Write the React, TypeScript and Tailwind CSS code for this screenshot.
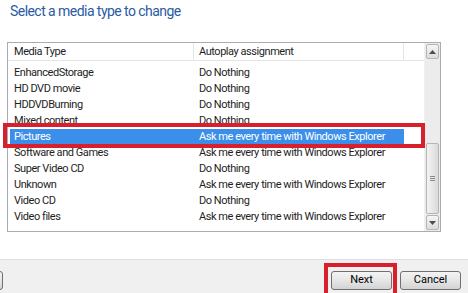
const ROWS = [
  { type: "EnhancedStorage", action: "Do Nothing" },
  { type: "HD DVD movie", action: "Do Nothing" },
  { type: "HDDVDBurning", action: "Do Nothing" },
  { type: "Mixed content", action: "Do Nothing" },
  { type: "Pictures", action: "Ask me every time with Windows Explorer", selected: true },
  { type: "Software and Games", action: "Ask me every time with Windows Explorer" },
  { type: "Super Video CD", action: "Do Nothing" },
  { type: "Unknown", action: "Ask me every time with Windows Explorer" },
  { type: "Video CD", action: "Do Nothing" },
  { type: "Video files", action: "Ask me every time with Windows Explorer" },
];

function Arrow({ down }: { down?: boolean }) {
  return (
    <svg width="7" height="4" viewBox="0 0 7 4" className={down ? "rotate-180" : ""}>
      <path d="M0 4 L3.5 0 L7 4 Z" fill="#4d4d4d" />
    </svg>
  );
}

function WinButton({ label, className = "" }: { label: string; className?: string }) {
  return (
    <div
      className={`flex h-[19px] items-center justify-center rounded-[3px] border border-[#707070] bg-gradient-to-b from-[#f4f4f4] via-[#e6e6e6] to-[#d3d3d3] text-[11px] text-black ${className}`}
    >
      {label}
    </div>
  );
}

export default function App() {
  return (
    <div
      className="relative h-[293px] w-[468px] overflow-hidden bg-white text-[#1e1e1e]"
      style={{ fontFamily: 'Roboto, "Open Sans", sans-serif' }}
    >
      <div className="pl-[10px] pt-[1px] text-[14px] leading-[20px] tracking-[-0.55px] text-[#2a5ba3]">
        Select a media type to change
      </div>

      {/* list view */}
      <div className="ml-[7px] mt-[21px] flex h-[190px] w-[434px] border border-[#a9acb2]">
        <div className="flex-1 whitespace-nowrap tracking-[-0.45px]">
          <div className="flex h-[18px] items-center border-b border-[#e5e5e5] text-[11px] text-[#1e1e1e]">
            <div className="w-[186px] border-r border-[#e5e5e5] pl-[6px] leading-[18px]">Media Type</div>
            <div className="w-[210px] border-r border-[#e5e5e5] pl-[5px] leading-[18px]">Autoplay assignment</div>
          </div>
          <div className="pt-[4px]">
            {ROWS.map((r) => (
              <div
                key={r.type}
                className={`flex h-[16px] items-center text-[11px] leading-[16px] ${
                  r.selected ? "ml-[2px] w-[394px] bg-[#3b8fea] text-white" : ""
                }`}
              >
                <div className={r.selected ? "w-[184px] pl-[4px]" : "w-[186px] pl-[6px]"}>{r.type}</div>
                <div className="pl-[5px]">{r.action}</div>
              </div>
            ))}
          </div>
        </div>

        {/* scrollbar */}
        <div className="flex w-[16px] flex-col border-l border-[#f0f0f0] bg-[#ececec] pb-[1px] pt-[1px]">
          <div className="mx-[1px] flex h-[15px] items-center justify-center rounded-[2px] border border-[#b5b5b5] bg-gradient-to-b from-[#f5f5f5] to-[#dcdcdc]">
            <Arrow />
          </div>
          <div className="h-[84px]" />
          <div className="mx-[1px] flex h-[71px] items-center justify-center rounded-[2px] border border-[#b5b5b5] bg-gradient-to-r from-[#f3f3f3] to-[#dadada]">
            <div className="flex flex-col gap-[1px]">
              <div className="h-px w-[5px] bg-[#8a8a8a]" />
              <div className="h-px w-[5px] bg-[#8a8a8a]" />
              <div className="h-px w-[5px] bg-[#8a8a8a]" />
            </div>
          </div>
          <div className="flex-1" />
          <div className="mx-[1px] flex h-[15px] items-center justify-center rounded-[2px] border border-[#b5b5b5] bg-gradient-to-b from-[#f5f5f5] to-[#dcdcdc]">
            <Arrow down />
          </div>
        </div>
      </div>

      {/* command area */}
      <div className="mt-[27px] flex h-[34px] items-start border-t border-[#dfdfdf] bg-[#f0f0f0] pt-[11px]">
        <WinButton label="" className="-ml-[60px] w-[63px]" />
        <div className="flex-1" />
        <WinButton label="Next" className="mr-[8px] w-[61px]" />
        <WinButton label="Cancel" className="mr-[7px] w-[61px]" />
      </div>

      {/* red highlights */}
      <div className="absolute left-[3px] top-[123px] h-[25px] w-[422px] border-[4px] border-[#d7202b]" />
      <div className="absolute left-[324px] top-[263px] h-[34px] w-[73px] border-[4px] border-[#d7202b]" />
    </div>
  );
}
